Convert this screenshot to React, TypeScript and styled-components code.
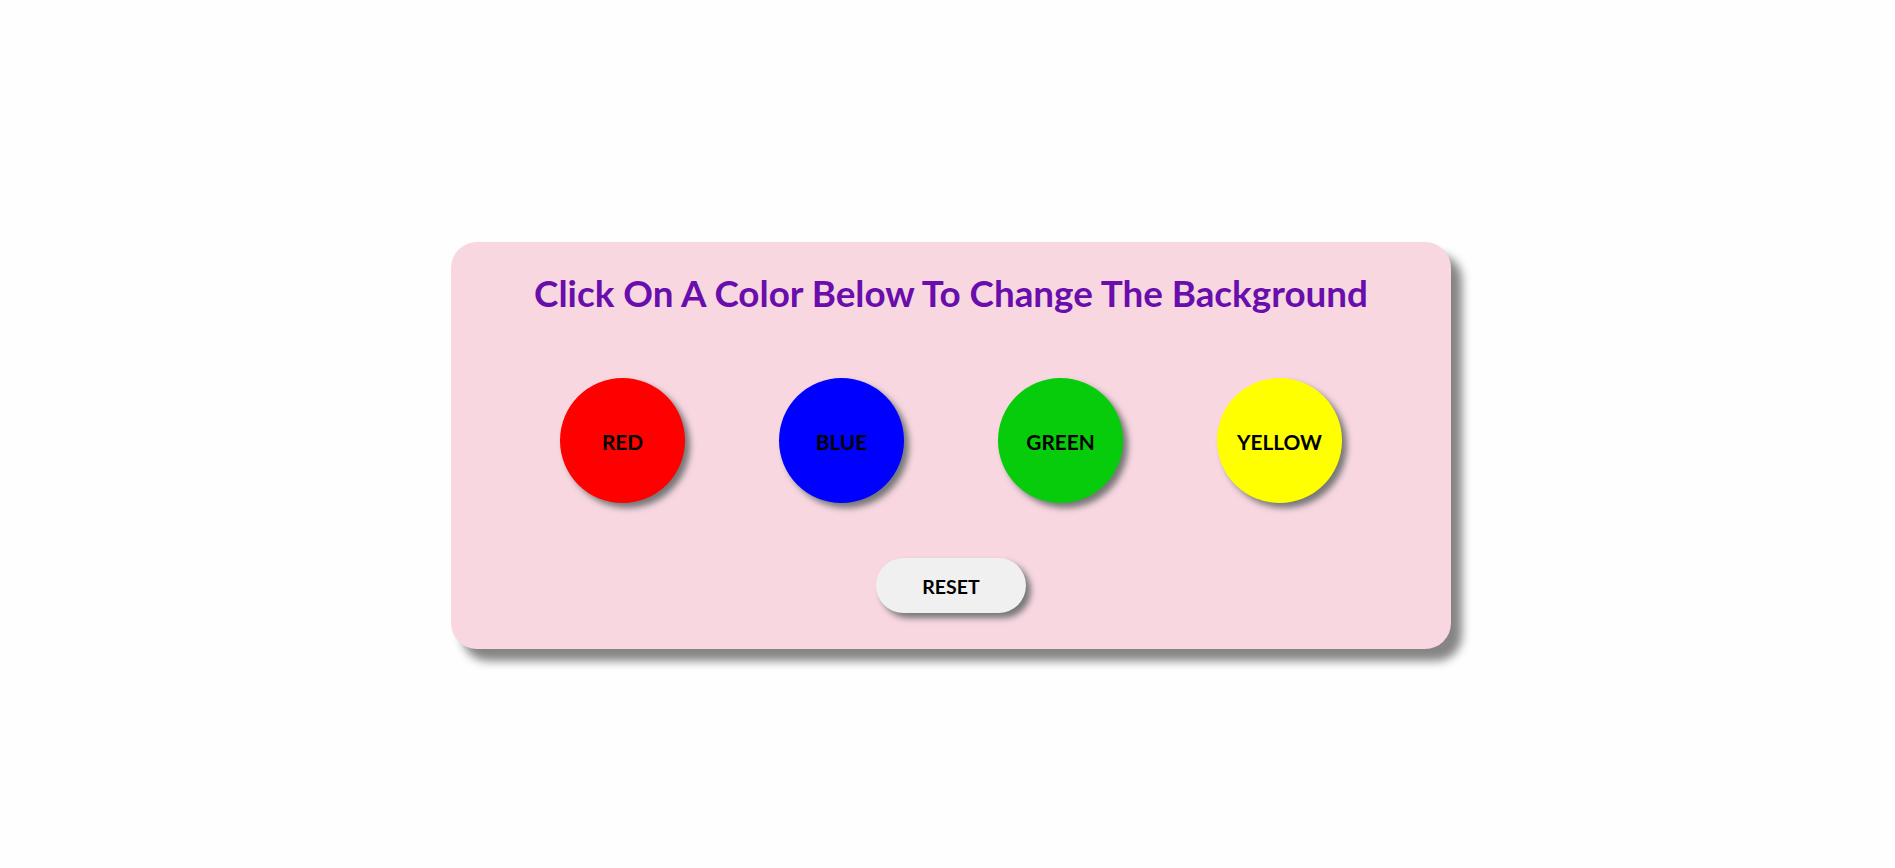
import React from "react";
import styled, { createGlobalStyle } from "styled-components";

const Global = createGlobalStyle`
  html, body { margin: 0; padding: 0; background: #fefefe; }
  body { font-family: Lato, "Open Sans", sans-serif; }
`;

const Page = styled.div`
  min-height: 868px;
  box-sizing: border-box;
  display: flex;
  justify-content: center;
  align-items: flex-start;
  padding-top: 242px;
  padding-left: 7px;
`;

const Card = styled.div`
  width: 1000px;
  height: 407px;
  box-sizing: border-box;
  background: #f8d7e1;
  border-radius: 26px;
  box-shadow: 11px 12px 10px #858585;
  display: flex;
  flex-direction: column;
  align-items: center;
  padding-top: 29px;
`;

const Title = styled.h1`
  margin: 0;
  font-family: Lato, sans-serif;
  font-weight: 700;
  font-size: 36.8px;
  line-height: 44px;
  color: #6a0dad;
`;

const Row = styled.div`
  display: flex;
  gap: 94px;
  margin-top: 63px;
`;

const Circle = styled.button<{ $bg: string }>`
  width: 125px;
  height: 125px;
  border-radius: 50%;
  border: none;
  padding: 2px 0 0;
  background: ${(p) => p.$bg};
  box-shadow: 5px 5px 6px #777;
  font-family: Lato, sans-serif;
  font-weight: 700;
  font-size: 20.8px;
  color: #000;
  cursor: pointer;
`;

const Reset = styled.button`
  margin-top: 55px;
  width: 150px;
  height: 55px;
  border: none;
  border-radius: 28px;
  padding: 1px 0 0;
  background: #f0f0f0;
  box-shadow: 5px 5px 6px #777;
  font-family: Lato, sans-serif;
  font-weight: 700;
  font-size: 19.5px;
  color: #000;
  cursor: pointer;
`;

const colors = [
  { name: "RED", bg: "#ff0000" },
  { name: "BLUE", bg: "#0000ff" },
  { name: "GREEN", bg: "#07cc0b" },
  { name: "YELLOW", bg: "#ffff00" },
];

export default function App() {
  const [bg, setBg] = React.useState<string | null>(null);
  return (
    <>
      <Global />
      <Page style={bg ? { background: bg } : undefined}>
        <Card>
          <Title>Click On A Color Below To Change The Background</Title>
          <Row>
            {colors.map((c) => (
              <Circle key={c.name} $bg={c.bg} onClick={() => setBg(c.bg)}>
                {c.name}
              </Circle>
            ))}
          </Row>
          <Reset onClick={() => setBg(null)}>RESET</Reset>
        </Card>
      </Page>
    </>
  );
}
